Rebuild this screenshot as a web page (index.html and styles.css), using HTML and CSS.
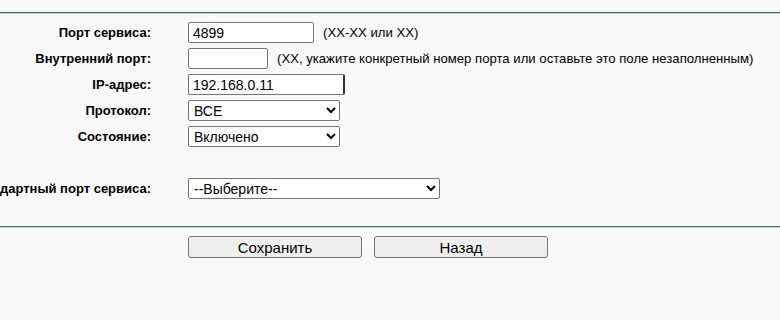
FILE: index.html
```html
<!DOCTYPE html>
<html lang="ru">
<head>
<meta charset="utf-8">
<link rel="stylesheet" href="styles.css">
</head>
<body>
<div class="rule rule-top"></div>
<form class="form">
  <div class="label">Порт сервиса:</div>
  <div class="field"><input class="inp inp-port" type="text" value="4899"><span class="hint">(XX-XX или XX)</span></div>

  <div class="label">Внутренний порт:</div>
  <div class="field"><input class="inp inp-short" type="text" value=""><span class="hint">(XX, укажите конкретный номер порта или оставьте это поле незаполненным)</span></div>

  <div class="label">IP-адрес:</div>
  <div class="field"><input class="inp inp-ip" type="text" value="192.168.0.11"></div>

  <div class="label">Протокол:</div>
  <div class="field"><select class="sel sel-mid"><option>ВСЕ</option></select></div>

  <div class="label">Состояние:</div>
  <div class="field"><select class="sel sel-mid"><option>Включено</option></select></div>

  <div class="label"></div>
  <div class="field"></div>

  <div class="label">Стандартный порт сервиса:</div>
  <div class="field"><select class="sel sel-wide"><option>--Выберите--</option></select></div>
</form>
<div class="rule rule-bottom"></div>
<div class="buttons">
  <button class="btn" type="button">Сохранить</button>
  <button class="btn" type="button">Назад</button>
</div>
</body>
</html>
```

FILE: styles.css
```css
html, body {
  margin: 0;
  padding: 0;
  background: #f9f9f9;
  font-family: "Liberation Sans", Arial, sans-serif;
  color: #000;
  overflow: hidden;
}

.rule {
  height: 0;
  border-top: 1px solid #2f7d58;
  border-bottom: 1px solid #b8d6c6;
}

.rule-top {
  margin-top: 12px;
}

.form {
  display: grid;
  grid-template-columns: 151px 1fr;
  grid-auto-rows: 21px;
  column-gap: 37px;
  row-gap: 5px;
  padding-top: 8px;
  padding-bottom: 27px;
  margin: 0;
}

.label {
  display: flex;
  align-items: center;
  justify-content: flex-end;
  white-space: nowrap;
  font-weight: bold;
  font-size: 13px;
}

.field {
  display: flex;
  align-items: center;
  white-space: nowrap;
}

.inp {
  box-sizing: border-box;
  height: 21px;
  border: 1px solid #767676;
  border-radius: 2px;
  background: #fff;
  padding: 0 0 0 4px;
  margin: 0;
  font-family: "Liberation Sans", Arial, sans-serif;
  font-size: 14px;
  color: #000;
}

.inp-port { width: 126px; }
.inp-short { width: 80px; }
.inp-ip { width: 157px; border-right: 2px solid #333; }

.hint {
  font-size: 13.15px;
  margin-left: 9px;
}

.sel {
  box-sizing: border-box;
  height: 21px;
  border: 1px solid #767676;
  border-radius: 2px;
  background: #fff;
  margin: 0;
  padding: 0 0 0 1px;
  font-family: "Liberation Sans", Arial, sans-serif;
  font-size: 14px;
  color: #000;
}

.sel-mid { width: 152px; }
.sel-wide { width: 252px; }

.buttons {
  display: flex;
  gap: 12px;
  padding-left: 188px;
  padding-top: 8px;
}

.btn {
  box-sizing: border-box;
  width: 174px;
  height: 22px;
  border: 1px solid #767676;
  border-radius: 3px;
  background: #efefef;
  font-family: "Liberation Sans", Arial, sans-serif;
  font-size: 15px;
  color: #000;
  margin: 0;
  padding: 0;
}
```
